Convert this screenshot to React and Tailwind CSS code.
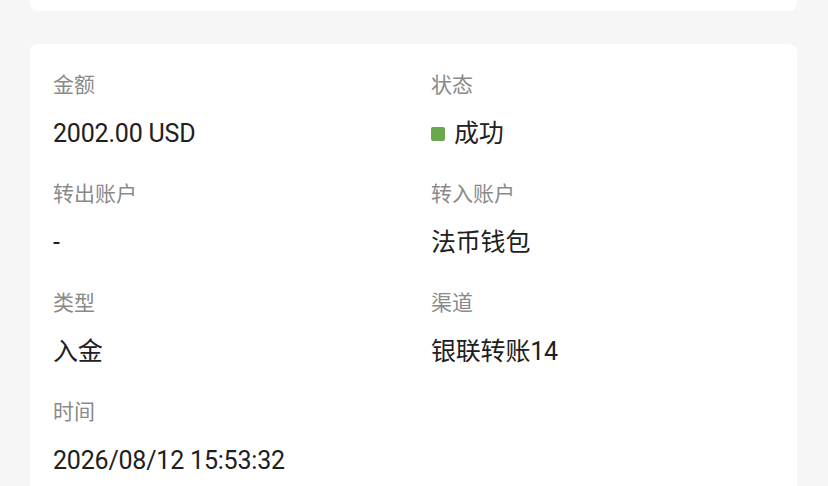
export default function App() {
  const rows = [
    [
      { label: "金额", value: "2002.00 USD" },
      { label: "状态", value: "成功", status: true },
    ],
    [
      { label: "转出账户", value: "-" },
      { label: "转入账户", value: "法币钱包" },
    ],
    [
      { label: "类型", value: "入金" },
      { label: "渠道", value: "银联转账14" },
    ],
    [{ label: "时间", value: "2026/08/12 15:53:32" }],
  ];

  return (
    <div
      className="h-[486px] overflow-hidden bg-[#f6f6f6] px-[30px] pr-[31px]"
      style={{ fontFamily: 'Roboto, "Noto Sans CJK SC", sans-serif' }}
    >
      <div className="h-[11px] rounded-b-lg bg-white" />
      <div className="mt-[33px] rounded-lg bg-white pl-[23px] pt-[27px]">
        {rows.map((row, i) => (
          <div key={i} className="grid grid-cols-[378px_1fr] pb-[30px]">
            {row.map((item) => (
              <div key={item.label}>
                <div className="text-[21px] leading-[28px] text-[#8a8a8a]">{item.label}</div>
                <div className="mt-[19px] flex items-center text-[25px] leading-[32px] tracking-[-0.2px] text-[#202020]">
                  {item.status && (
                    <span className="mr-[9px] inline-block h-[14px] w-[14px] rounded-[2px] bg-[#6aa84f]" />
                  )}
                  {item.value}
                </div>
              </div>
            ))}
          </div>
        ))}
      </div>
    </div>
  );
}
